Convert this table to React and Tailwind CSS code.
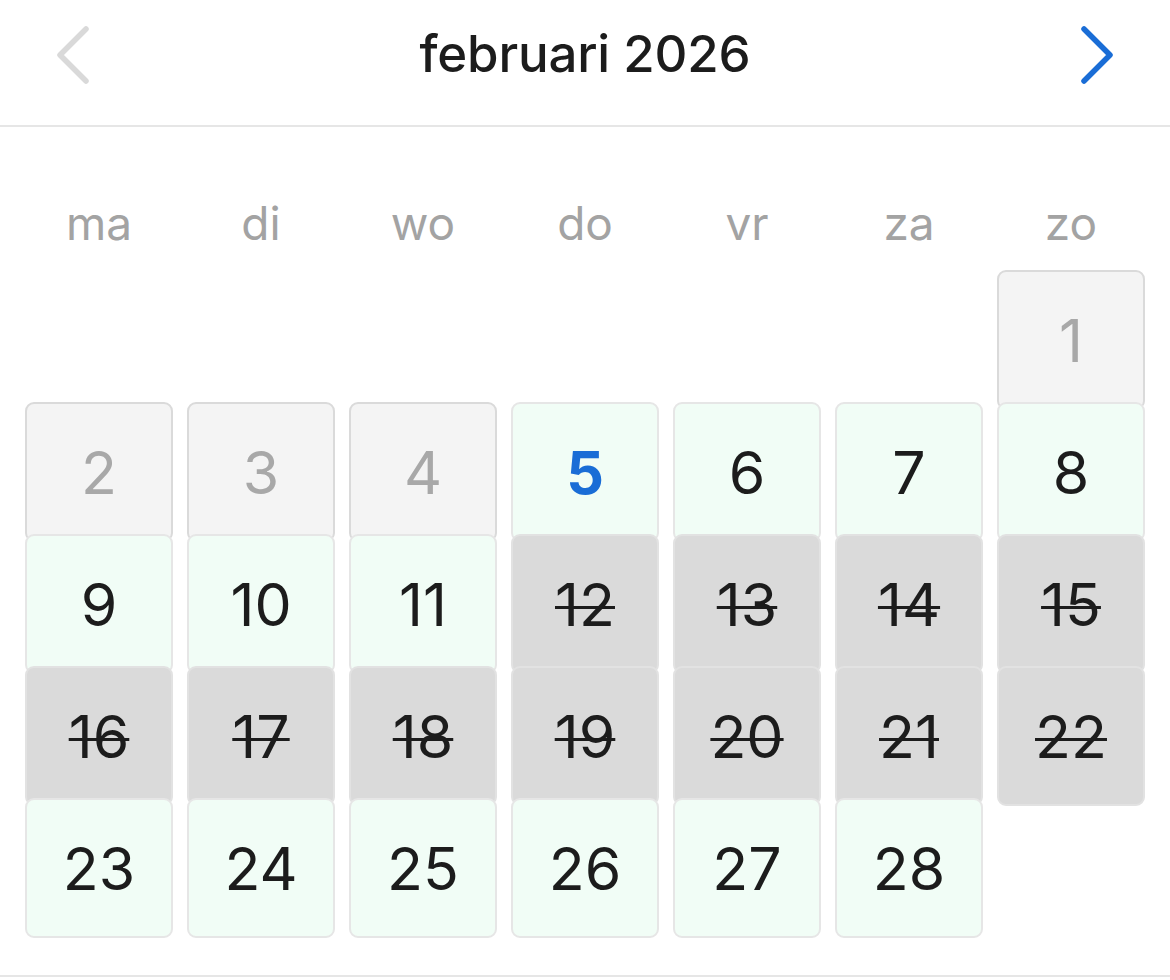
import React from "react";

const weekdays = ["ma", "di", "wo", "do", "vr", "za", "zo"];

const days = [
  { d: 1, t: "past", col: 7 },
  { d: 2, t: "past" }, { d: 3, t: "past" }, { d: 4, t: "past" }, { d: 5, t: "today" }, { d: 6, t: "open" }, { d: 7, t: "open" }, { d: 8, t: "open" },
  { d: 9, t: "open" }, { d: 10, t: "open" }, { d: 11, t: "open" }, { d: 12, t: "blocked" }, { d: 13, t: "blocked" }, { d: 14, t: "blocked" }, { d: 15, t: "blocked" },
  { d: 16, t: "blocked" }, { d: 17, t: "blocked" }, { d: 18, t: "blocked" }, { d: 19, t: "blocked" }, { d: 20, t: "blocked" }, { d: 21, t: "blocked" }, { d: 22, t: "blocked" },
  { d: 23, t: "open" }, { d: 24, t: "open" }, { d: 25, t: "open" }, { d: 26, t: "open" }, { d: 27, t: "open" }, { d: 28, t: "open" },
];

function Cell({ d, t, col }) {
  let cls = "";
  if (t === "past") cls = "bg-[#f4f4f4] border-[#dadada] text-[#a8a8a8]";
  else if (t === "open") cls = "bg-[#f1fdf6] border-[#e6e6e6] text-[#1c1c1c]";
  else if (t === "today") cls = "bg-[#f1fdf6] border-[#e6e6e6] text-[#1a6dd6] font-bold";
  else cls = "bg-[#dadada] border-[#e2e2e2] text-[#1c1c1c] line-through decoration-[3px]";
  return (
    <div
      className={`h-[140px] rounded-[9px] border-2 flex items-center justify-center text-[59px] leading-none ${cls} ${col === 7 ? "col-start-7" : ""}`}
    >
      <span>{d}</span>
    </div>
  );
}

export default function App() {
  return (
    <div
      className="w-[1170px] h-[980px] bg-white overflow-hidden"
      style={{ fontFamily: "Inter, 'Noto Sans', sans-serif" }}
    >
      <div className="h-[127px] flex items-center justify-between px-[52px] border-b-2 border-[#e6e6e6]">
        <svg width="42" height="62" viewBox="0 0 42 62" fill="none" className="-mt-[16px]">
          <path d="M34 5 L8 31 L34 57" stroke="#d9d9d9" strokeWidth="5.5" strokeLinecap="round" strokeLinejoin="round" />
        </svg>
        <div className="text-[51px] font-medium text-[#1c1c1c] -mt-[16px] tracking-[-0.2px]">februari 2026</div>
        <svg width="42" height="62" viewBox="0 0 42 62" fill="none" className="-mt-[16px]">
          <path d="M8 5 L34 31 L8 57" stroke="#1a6dd6" strokeWidth="5.5" strokeLinecap="round" strokeLinejoin="round" />
        </svg>
      </div>
      <div className="px-[25px]">
        <div className="grid grid-cols-7 gap-x-[14px] h-[143px] items-end pb-[24px]">
          {weekdays.map((w) => (
            <div key={w} className="text-center text-[46px] leading-none text-[#a3a3a3]">{w}</div>
          ))}
        </div>
        <div className="grid grid-cols-7 gap-x-[14px] auto-rows-[132px]">
          {days.map((x) => (
            <Cell key={x.d} {...x} />
          ))}
        </div>
      </div>
      <div className="mt-[45px] border-t-2 border-[#e6e6e6]" />
    </div>
  );
}
